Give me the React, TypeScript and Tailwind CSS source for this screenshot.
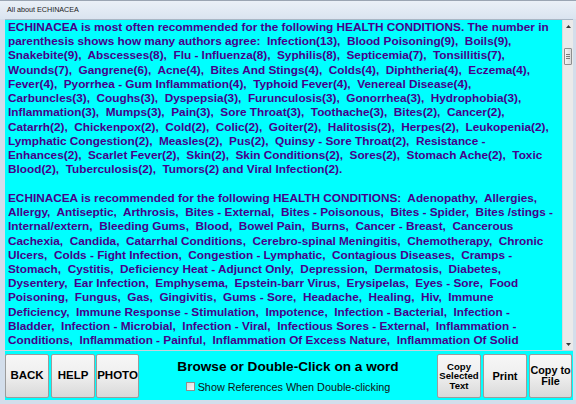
import React from 'react';

const PARA1 = [
  'ECHINACEA is most often recommended for the following HEALTH CONDITIONS. The number in',
  'parenthesis shows how many authors agree:  Infection(13),  Blood Poisoning(9),  Boils(9),',
  'Snakebite(9),  Abscesses(8),  Flu - Influenza(8),  Syphilis(8),  Septicemia(7),  Tonsillitis(7),',
  'Wounds(7),  Gangrene(6),  Acne(4),  Bites And Stings(4),  Colds(4),  Diphtheria(4),  Eczema(4),',
  'Fever(4),  Pyorrhea - Gum Inflammation(4),  Typhoid Fever(4),  Venereal Disease(4),',
  'Carbuncles(3),  Coughs(3),  Dyspepsia(3),  Furunculosis(3),  Gonorrhea(3),  Hydrophobia(3),',
  'Inflammation(3),  Mumps(3),  Pain(3),  Sore Throat(3),  Toothache(3),  Bites(2),  Cancer(2),',
  'Catarrh(2),  Chickenpox(2),  Cold(2),  Colic(2),  Goiter(2),  Halitosis(2),  Herpes(2),  Leukopenia(2),',
  'Lymphatic Congestion(2),  Measles(2),  Pus(2),  Quinsy - Sore Throat(2),  Resistance -',
  'Enhances(2),  Scarlet Fever(2),  Skin(2),  Skin Conditions(2),  Sores(2),  Stomach Ache(2),  Toxic',
  'Blood(2),  Tuberculosis(2),  Tumors(2) and Viral Infection(2).',
];

const PARA2 = [
  'ECHINACEA is recommended for the following HEALTH CONDITIONS:  Adenopathy,  Allergies,',
  'Allergy,  Antiseptic,  Arthrosis,  Bites - External,  Bites - Poisonous,  Bites - Spider,  Bites /stings -',
  'Internal/extern,  Bleeding Gums,  Blood,  Bowel Pain,  Burns,  Cancer - Breast,  Cancerous',
  'Cachexia,  Candida,  Catarrhal Conditions,  Cerebro-spinal Meningitis,  Chemotherapy,  Chronic',
  'Ulcers,  Colds - Fight Infection,  Congestion - Lymphatic,  Contagious Diseases,  Cramps -',
  'Stomach,  Cystitis,  Deficiency Heat - Adjunct Only,  Depression,  Dermatosis,  Diabetes,',
  'Dysentery,  Ear Infection,  Emphysema,  Epstein-barr Virus,  Erysipelas,  Eyes - Sore,  Food',
  'Poisoning,  Fungus,  Gas,  Gingivitis,  Gums - Sore,  Headache,  Healing,  Hiv,  Immune',
  'Deficiency,  Immune Response - Stimulation,  Impotence,  Infection - Bacterial,  Infection -',
  'Bladder,  Infection - Microbial,  Infection - Viral,  Infectious Sores - External,  Inflammation -',
  'Conditions,  Inflammation - Painful,  Inflammation Of Excess Nature,  Inflammation Of Solid',
  'Nature,  Inflammation Of Tissues,  Inflammation - Joints,  Influenza,  Malaria,  Malignancies',
];

const Btn: React.FC<{ children: React.ReactNode; className?: string }> = ({ children, className = '' }) => (
  <button
    className={`h-[44px] flex flex-col items-center justify-center rounded-[2px] border border-[#9c9c9c] bg-gradient-to-b from-[#f7f7f7] via-[#eeeeee] to-[#d9d9d9] text-black font-bold leading-none ${className}`}
  >
    {children}
  </button>
);

export default function App() {
  return (
    <div className="w-[576px] h-[404px] overflow-hidden flex flex-col bg-[#d3deeb] font-['Liberation_Sans',Arial,sans-serif]">
      {/* title bar */}
      <div className="h-[19px] shrink-0 flex items-center pl-[7px] pt-[1px] border-t border-[#9aa5b3] bg-gradient-to-b from-[#eaf0f7] to-[#dae4f0] text-[7.2px] text-[#1b1b1b]">
        All about ECHINACEA
      </div>

      <div className="flex-1 flex flex-col pl-[5px] pr-[3px] pb-[4px]">
        {/* text area + scrollbar */}
        <div className="h-[331px] shrink-0 flex border-t border-[#aab6c4] overflow-hidden">
          <div className="flex-1 h-full bg-[#00ffff] overflow-hidden pl-[3px] text-[11.8px] leading-[14.23px] font-bold text-[#46008a]">
            {PARA1.map((l, i) => (
              <div key={'a' + i} className="whitespace-pre">{l}</div>
            ))}
            <div className="h-[14.23px]" />
            {PARA2.map((l, i) => (
              <div key={'b' + i} className="whitespace-pre">{l}</div>
            ))}
          </div>
          <div className="w-[11px] flex flex-col bg-[#eaeaea] border-l border-[#dadada]">
            <div className="h-[12px] flex items-center justify-center">
              <svg width="5" height="3" viewBox="0 0 5 3"><path d="M0 3 L2.5 0 L5 3 Z" fill="#3a3a3a" /></svg>
            </div>
            <div className="flex-1 flex flex-col items-center">
              <div className="mt-[16px] w-[8px] h-[17px] rounded-[1px] border border-[#8f8f8f] bg-gradient-to-r from-[#f4f4f4] to-[#dadada] flex flex-col items-center justify-center gap-[1px]">
                <div className="w-[4px] h-px bg-[#7a7a7a]" />
                <div className="w-[4px] h-px bg-[#7a7a7a]" />
                <div className="w-[4px] h-px bg-[#7a7a7a]" />
              </div>
            </div>
            <div className="h-[12px] flex items-center justify-center">
              <svg width="5" height="3" viewBox="0 0 5 3"><path d="M0 0 L2.5 3 L5 0 Z" fill="#3a3a3a" /></svg>
            </div>
          </div>
        </div>

        <div className="h-px bg-[#c9d2dc]" />

        {/* bottom panel */}
        <div className="h-[49px] bg-[#00ffff] flex items-start pt-[3px] pr-[1px]">
          <Btn className="w-[44px] text-[11.5px]">BACK</Btn>
          <Btn className="w-[44px] ml-[2px] text-[11.5px]">HELP</Btn>
          <Btn className="w-[43px] ml-[1px] text-[11.5px]">PHOTO</Btn>

          <div className="flex-1 h-[44px] flex flex-col items-center pt-[6px]">
            <div className="text-[13.6px] font-bold text-black leading-none">Browse or Double-Click on a word</div>
            <div className="mt-[8px] flex items-center gap-[3px] text-[10.8px] text-[#111] leading-none">
              <span className="w-[9px] h-[9px] border border-[#8e8f8f] bg-gradient-to-br from-[#dcdcdc] to-[#f6f6f6]" />
              <span>Show References When Double-clicking</span>
            </div>
          </div>

          <Btn className="w-[44px] text-[9.6px] leading-[10.7px]">
            <span>Copy</span>
            <span>Selected</span>
            <span>Text</span>
          </Btn>
          <Btn className="w-[44px] ml-[2px] text-[11px]">Print</Btn>
          <Btn className="w-[43px] ml-[2px] text-[10.8px] leading-[11.7px]">
            <span>Copy to</span>
            <span>File</span>
          </Btn>
        </div>
      </div>
    </div>
  );
}
